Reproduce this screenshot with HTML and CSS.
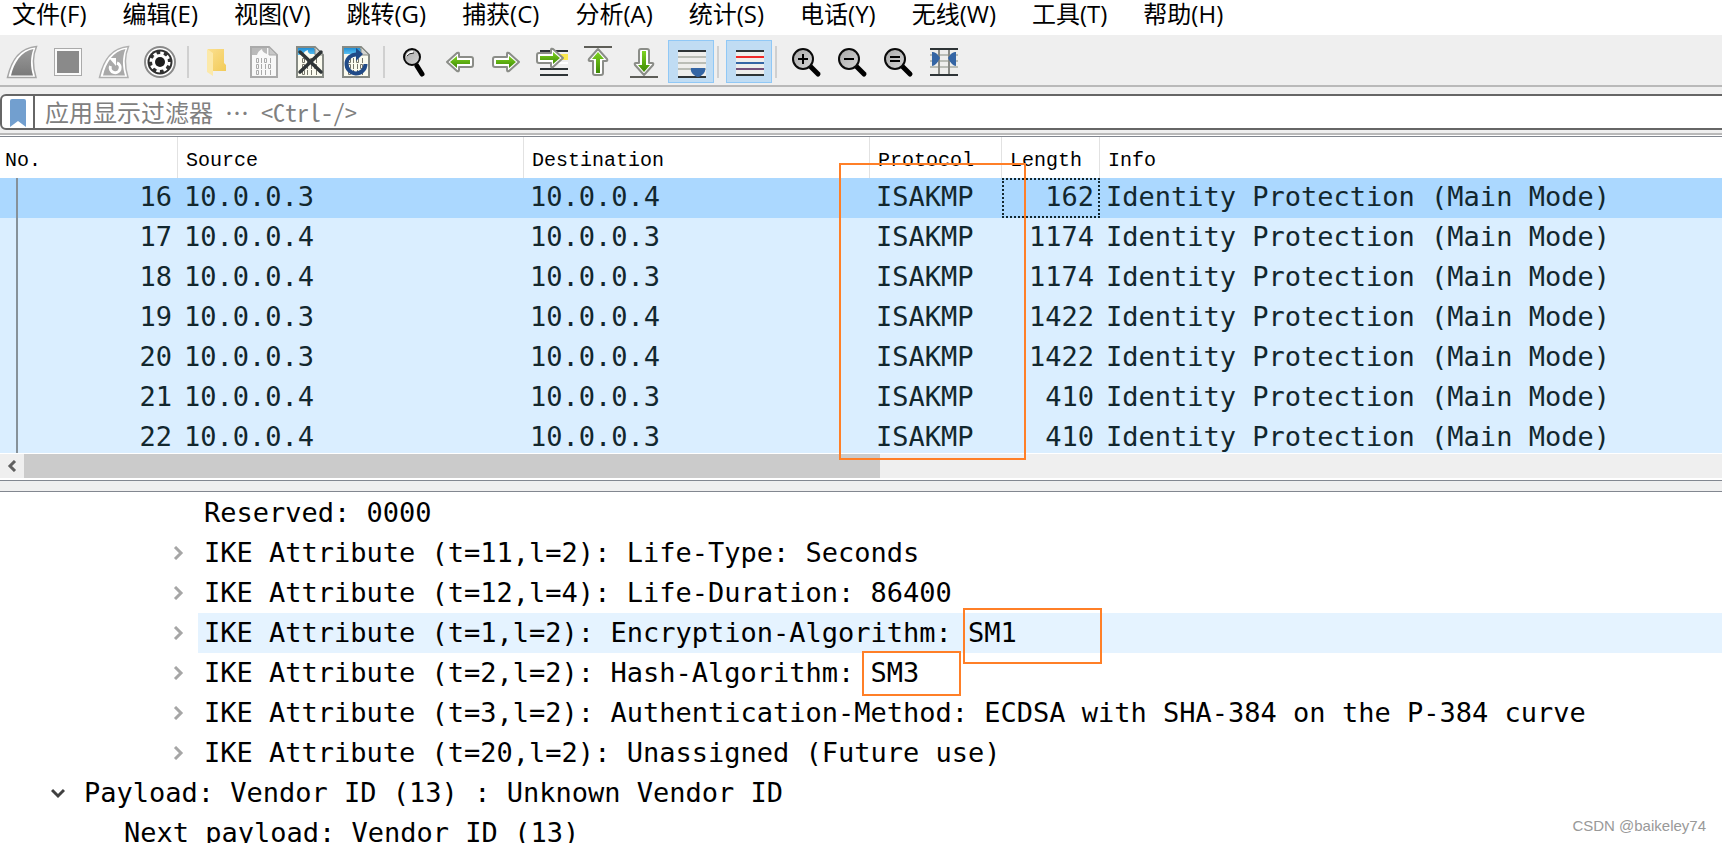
FILE: index.html
```html
<!DOCTYPE html>
<html lang="zh-CN">
<head>
<meta charset="utf-8">
<title>Wireshark</title>
<link rel="stylesheet" href="styles.css">
</head>
<body>
<svg class="defs" aria-hidden="true">
  <defs>
    <linearGradient id="grey" x1="0" y1="0" x2="0" y2="1"><stop offset="0" stop-color="#9a9a9a"/><stop offset="1" stop-color="#7a7a7a"/></linearGradient>
    <linearGradient id="green" x1="0" y1="0" x2="0" y2="1"><stop offset="0" stop-color="#7ed321"/><stop offset="1" stop-color="#3f8a05"/></linearGradient>
    <linearGradient id="sky" x1="0" y1="0" x2="0" y2="1"><stop offset="0" stop-color="#1f8fd6"/><stop offset="1" stop-color="#5cc0f0"/></linearGradient>
    <linearGradient id="fold" x1="0" y1="0" x2="1" y2="1"><stop offset="0" stop-color="#fbdf8e"/><stop offset="1" stop-color="#f2cb58"/></linearGradient>
    <linearGradient id="lens" x1="0" y1="0" x2="1" y2="1"><stop offset="0" stop-color="#a8a8a8"/><stop offset="1" stop-color="#d6d6d6"/></linearGradient>
    <g id="bits" fill="none" stroke-width="1">
      <path d="M6.500 12.500h2v4h-2zM11.500 12v5M14.500 12.500h2v4h-2zM20.500 12v5M6.500 18.500h2v4h-2zM11.500 18v5M15.500 18v5M18.500 18.500h2v4h-2zM6.500 24.500h2v4h-2zM11.500 24v5M15.500 24v5M20.500 24v5"/>
    </g>
    <g id="glass">
      <path d="M18 18L26 26" stroke="#000" stroke-width="5" stroke-linecap="round"/>
      <circle cx="11" cy="11" r="10" fill="url(#lens)" stroke="#0a0a0a" stroke-width="2"/>
    </g>
    <path id="arrow" d="M1 10L11 1Q13 0 13 2V5H25Q27 5 27 7V13Q27 15 25 15H13V18Q13 20 11 19Z" fill="#fff" stroke="#8b8d88" stroke-width="2" stroke-linejoin="round"/>
  </defs>
</svg>

<nav class="menu">
  <button>文件(F)</button><button>编辑(E)</button><button>视图(V)</button><button>跳转(G)</button><button>捕获(C)</button><button>分析(A)</button><button>统计(S)</button><button>电话(Y)</button><button>无线(W)</button><button>工具(T)</button><button>帮助(H)</button>
</nav>

<div class="toolbar">
  <button class="tool" aria-label="开始捕获"><svg viewBox="0 39 46 46">
    <path d="M7.500 77.500C11 62 18 48 36.500 46.500C32 57 33 68 36 77.500Z" fill="#fff" stroke="#a6a6a6" stroke-width="1.500"/>
    <path d="M11 75.500C14 63 21 51 33.500 49C30 58 30.500 67 33 75.500Z" fill="url(#grey)"/></svg></button>
  <button class="tool" aria-label="停止捕获"><svg viewBox="46 39 46 46">
    <rect x="54.500" y="48.500" width="27" height="27" fill="#fafafa" stroke="#aaa"/><rect x="57" y="51" width="22" height="22" fill="#8a8a8a"/></svg></button>
  <button class="tool" aria-label="重新开始捕获"><svg viewBox="92 39 46 46">
    <path d="M99.500 77.500C103 62 110 48 128.500 46.500C124 57 125 68 128 77.500Z" fill="#fff" stroke="#b0b0b0" stroke-width="1.500"/>
    <path d="M103 75.500C106 63 113 51 125.500 49C122 58 122.500 67 125 75.500Z" fill="#a9a9a9"/>
    <path d="M117 63A5 5 0 1 1 110.500 66" fill="none" stroke="#fff" stroke-width="3"/><path d="M109 58h7v8z" fill="#fff"/></svg></button>
  <button class="tool" aria-label="捕获选项"><svg viewBox="138 39 46 46">
    <circle cx="160" cy="62" r="15" fill="#fff" stroke="#8a8a8a" stroke-width="2"/><circle cx="160" cy="62" r="12.500" fill="#303030"/>
    <circle cx="160" cy="62" r="9" fill="none" stroke="#fff" stroke-width="3" stroke-dasharray="3.500 3.570"/>
    <circle cx="160" cy="62" r="8" fill="#fff"/><circle cx="160" cy="62" r="5" fill="#1c1c1c"/></svg></button>
  <span class="sep"></span>
  <button class="tool" aria-label="打开"><svg viewBox="196 39 46 46">
    <path d="M208 49H224V63L226 65V71H208Z" fill="url(#fold)"/><path d="M207 49L213 53V76L207 72Z" fill="#fce9a9"/></svg></button>
  <button class="tool" aria-label="保存"><svg viewBox="242 39 46 46">
    <g transform="translate(250 46)"><path d="M1 1H19L27 9V31H1Z" fill="#f8f8f8" stroke="#aaa" stroke-width="2"/><path d="M2 2H17V8Q12 6 12 3Q8 5 7 9H2Z" fill="#b9b9b9"/><path d="M19 1V9H27Z" fill="#c8c8c8" stroke="#aaa"/><use href="#bits" stroke="#aaa"/></g></svg></button>
  <button class="tool" aria-label="关闭"><svg viewBox="288 39 46 46">
    <g transform="translate(296 46)"><path d="M1 1H19L27 9V31H1Z" fill="#fbfbef" stroke="#868a84" stroke-width="2"/><path d="M2 2H18L23 8H14Q11 6 12 4Q8 5 7 9H2Z" fill="url(#sky)"/><path d="M19 1V9H27Z" fill="#d5d5d0" stroke="#868a84"/><use href="#bits" stroke="#77776c"/><path d="M4 6L25 26M25 6L4 26" stroke="#2e3436" stroke-width="3.500" stroke-linecap="round"/></g></svg></button>
  <button class="tool" aria-label="重新加载"><svg viewBox="334 39 46 46">
    <g transform="translate(342 46)"><path d="M1 1H19L27 9V31H1Z" fill="#fbfbef" stroke="#868a84" stroke-width="2"/><path d="M2 2H18L23 8H2Z" fill="url(#sky)"/><path d="M19 1V9H27Z" fill="#d5d5d0" stroke="#868a84"/><use href="#bits" stroke="#77776c"/><path d="M15 8.500A9.500 9.500 0 1 0 23.500 18" fill="none" stroke="#204a87" stroke-width="4"/><path d="M14 2L21 8L14 15Z" fill="#204a87"/></g></svg></button>
  <span class="sep"></span>
  <button class="tool" aria-label="查找分组"><svg viewBox="392 39 46 46">
    <path d="M417 66L422 74" stroke="#000" stroke-width="5" stroke-linecap="round"/><circle cx="412" cy="57" r="8" fill="url(#lens)" stroke="#0a0a0a" stroke-width="2"/><path d="M407 56Q408 52 413 52" fill="none" stroke="#fff" stroke-width="2"/><path d="M407 56Q409 53 414 53" fill="none" stroke="#222" stroke-width="1"/></svg></button>
  <button class="tool" aria-label="上一个分组"><svg viewBox="438 39 46 46">
    <use href="#arrow" x="446" y="52"/><path d="M450 62L457 56V60H470V64H457V68Z" fill="url(#green)"/></svg></button>
  <button class="tool" aria-label="下一个分组"><svg viewBox="484 39 46 46">
    <g transform="matrix(-1 0 0 1 520 52)"><use href="#arrow"/><path d="M4 10L11 4V8H24V12H11V16Z" fill="url(#green)"/></g></svg></button>
  <button class="tool" aria-label="转到分组"><svg viewBox="530 39 46 46">
    <path d="M540 51H568M540 69H568M540 75H568" stroke="#2e3436" stroke-width="2"/><rect x="552" y="54" width="16" height="6" fill="#fce94f"/><path d="M540 63H568" stroke="#fff" stroke-width="2"/>
    <g transform="matrix(-1 0 0 1 564 48)"><use href="#arrow"/><path d="M4 10L11 4V8H24V12H11V16Z" fill="url(#green)"/></g></svg></button>
  <button class="tool" aria-label="首个分组"><svg viewBox="576 39 46 46">
    <path d="M584 47H612" stroke="#5e5e58" stroke-width="2"/><g transform="matrix(0 1 1 0 588 48)"><use href="#arrow"/></g><path d="M598 52L604 59H600V73H596V59H592Z" transform="translate(0 0)" fill="url(#green)"/></svg></button>
  <button class="tool" aria-label="最新分组"><svg viewBox="622 39 46 46">
    <path d="M630 77H658" stroke="#5e5e58" stroke-width="2"/><g transform="matrix(0 -1 1 0 634 76)"><use href="#arrow"/></g><path d="M644 72L650 65H646V51H642V65H638Z" fill="url(#green)"/></svg></button>
  <button class="tool on" aria-label="自动滚动" aria-pressed="true"><svg viewBox="668 39 46 46">
    <rect x="678" y="50" width="28" height="28" fill="#eeeeec"/><path d="M678 51H706M678 77H706" stroke="#2e3436" stroke-width="2"/><path d="M678 57H706M678 63H706M678 69H706" stroke="#babdb6" stroke-width="2"/><path d="M691 68H705Q706 72 702 75Q698 79 694 75Q690 72 691 68Z" fill="#3465a4"/></svg></button>
  <span class="sep"></span>
  <button class="tool on" aria-label="着色" aria-pressed="true"><svg viewBox="726 39 46 46">
    <rect x="736" y="50" width="28" height="26" fill="#eeeeec"/><path d="M736 51H764M736 75H764" stroke="#2e3436" stroke-width="2"/><path d="M736 57H764" stroke="#ef2929" stroke-width="2"/><path d="M736 63H764" stroke="#3465a4" stroke-width="2"/><path d="M736 69H764" stroke="#75507b" stroke-width="2"/></svg></button>
  <span class="sep"></span>
  <button class="tool" aria-label="放大"><svg viewBox="784 39 46 46"><use href="#glass" x="792" y="48"/><path d="M798 59H808M803 54V64" stroke="#000" stroke-width="2"/></svg></button>
  <button class="tool" aria-label="缩小"><svg viewBox="830 39 46 46"><use href="#glass" x="838" y="48"/><path d="M844 59H854" stroke="#000" stroke-width="2"/></svg></button>
  <button class="tool" aria-label="正常大小"><svg viewBox="876 39 46 46"><use href="#glass" x="884" y="48"/><path d="M890 57H900M890 61H900" stroke="#000" stroke-width="2"/></svg></button>
  <button class="tool" aria-label="调整列宽"><svg viewBox="922 39 46 46">
    <rect x="930" y="48" width="28" height="28" fill="#eeeeec"/><path d="M930 55H958M930 61H958M930 67H958" stroke="#babdb6" stroke-width="2"/><path d="M939 48V76M949 48V76" stroke="#888a85" stroke-width="2"/><path d="M930 49H958M930 75H958" stroke="#2e3436" stroke-width="2"/><path d="M932 52Q936 51 940 58Q936 66 932 66ZM956 52Q952 51 948 58Q952 66 956 66Z" fill="#3465a4"/></svg></button>
</div>

<div class="filter-row">
  <div class="filter">
    <button class="bookmark" aria-label="书签"><svg width="16" height="28" viewBox="0 0 16 28"><path d="M0 2Q0 0 2 0H14Q16 0 16 2V28L8 22L0 28Z" fill="#729fcf"/></svg></button>
    <input type="text" aria-label="显示过滤器" placeholder="应用显示过滤器 ⋯ &lt;Ctrl-/&gt;">
  </div>
</div>

<main class="panes">
  <section class="packets">
    <div class="rows">
      <table>
        <colgroup><col class="c-no"><col class="c-addr"><col class="c-addr"><col class="c-proto"><col class="c-len"><col></colgroup>
        <thead><tr><th>No.</th><th>Source</th><th>Destination</th><th>Protocol</th><th>Length</th><th>Info</th></tr></thead>
        <tbody>
          <tr class="selected"><td class="num">16</td><td>10.0.0.3</td><td>10.0.0.4</td><td>ISAKMP</td><td class="num focus">162</td><td>Identity Protection (Main Mode)</td></tr>
          <tr><td class="num">17</td><td>10.0.0.4</td><td>10.0.0.3</td><td>ISAKMP</td><td class="num">1174</td><td>Identity Protection (Main Mode)</td></tr>
          <tr><td class="num">18</td><td>10.0.0.4</td><td>10.0.0.3</td><td>ISAKMP</td><td class="num">1174</td><td>Identity Protection (Main Mode)</td></tr>
          <tr><td class="num">19</td><td>10.0.0.3</td><td>10.0.0.4</td><td>ISAKMP</td><td class="num">1422</td><td>Identity Protection (Main Mode)</td></tr>
          <tr><td class="num">20</td><td>10.0.0.3</td><td>10.0.0.4</td><td>ISAKMP</td><td class="num">1422</td><td>Identity Protection (Main Mode)</td></tr>
          <tr><td class="num">21</td><td>10.0.0.4</td><td>10.0.0.3</td><td>ISAKMP</td><td class="num">410</td><td>Identity Protection (Main Mode)</td></tr>
          <tr><td class="num">22</td><td>10.0.0.4</td><td>10.0.0.3</td><td>ISAKMP</td><td class="num">410</td><td>Identity Protection (Main Mode)</td></tr>
        </tbody>
      </table>
    </div>
    <div class="scrollbar">
      <button class="scroll-left" aria-label="向左滚动"><svg width="10" height="12" viewBox="0 0 10 12"><path d="M8 1L3 6L8 11" fill="none" stroke="#606060" stroke-width="3"/></svg></button>
      <div class="thumb"></div>
    </div>
    <div class="mark mark-protocol"></div>
  </section>
  <div class="splitter"></div>
  <section class="details">
    <ul class="tree">
      <li class="deep"><span class="chev"></span><span class="label">Reserved: 0000</span></li>
      <li class="deep"><span class="chev"><svg viewBox="0 0 14 14"><path d="M4 1L10 7L4 13"/></svg></span><span class="label">IKE Attribute (t=11,l=2): Life-Type: Seconds</span></li>
      <li class="deep"><span class="chev"><svg viewBox="0 0 14 14"><path d="M4 1L10 7L4 13"/></svg></span><span class="label">IKE Attribute (t=12,l=4): Life-Duration: 86400</span></li>
      <li class="deep hover"><span class="chev"><svg viewBox="0 0 14 14"><path d="M4 1L10 7L4 13"/></svg></span><span class="label">IKE Attribute (t=1,l=2): Encryption-Algorithm: SM1</span></li>
      <li class="deep"><span class="chev"><svg viewBox="0 0 14 14"><path d="M4 1L10 7L4 13"/></svg></span><span class="label">IKE Attribute (t=2,l=2): Hash-Algorithm: SM3</span></li>
      <li class="deep"><span class="chev"><svg viewBox="0 0 14 14"><path d="M4 1L10 7L4 13"/></svg></span><span class="label">IKE Attribute (t=3,l=2): Authentication-Method: ECDSA with SHA-384 on the P-384 curve</span></li>
      <li class="deep"><span class="chev"><svg viewBox="0 0 14 14"><path d="M4 1L10 7L4 13"/></svg></span><span class="label">IKE Attribute (t=20,l=2): Unassigned (Future use)</span></li>
      <li class="top"><span class="chev open"><svg viewBox="0 0 14 14"><path d="M1 4L7 10L13 4"/></svg></span><span class="label">Payload: Vendor ID (13) : Unknown Vendor ID</span></li>
      <li class="mid"><span class="chev"></span><span class="label">Next payload: Vendor ID (13)</span></li>
    </ul>
    <div class="mark mark-encryption"></div>
    <div class="mark mark-hash"></div>
    <div class="watermark">CSDN @baikeley74</div>
  </section>
</main>
</body>
</html>
```

FILE: styles.css
```css
* { box-sizing: border-box; }

:root {
  --mono: "DejaVu Sans Mono", monospace;
  --line: #828790;
}

body {
  margin: 0;
  height: 100vh;
  overflow: hidden;
  display: flex;
  flex-direction: column;
  background: #fff;
  color: #000;
  font-family: "Open Sans", "Noto Sans CJK SC", sans-serif;
}

button {
  border: 0;
  padding: 0;
  background: none;
  color: inherit;
  font: inherit;
}

.defs { position: absolute; width: 0; height: 0; }

.menu {
  display: flex;
  gap: 36px;
  flex: none;
  height: 37px;
  padding: 0 12px 8px;
  border-bottom: 2px solid #efefef;
  font-size: 24px;
  line-height: 27px;
  white-space: nowrap;
}

.toolbar {
  display: flex;
  align-items: center;
  flex: none;
  height: 50px;
  padding-top: 1px;
  background: #efefef;
  border-bottom: 2px solid #b9b9b9;
}

.tool { width: 46px; height: 46px; flex: none; }
.tool svg { display: block; width: 46px; height: 46px; }
.tool.on { height: 43px; background: #c0dcf3; border: 1px solid #90c8f6; }
.tool.on svg { margin: -2px -1px; }

.sep {
  flex: none;
  width: 2px;
  height: 32px;
  margin: 0 7px 0 3px;
  background: #d0d0d0;
}

.filter-row {
  flex: none;
  padding: 7px 0 3px;
  background: #efefef;
  border-bottom: 2px solid #b9b9b9;
}

.filter {
  display: flex;
  height: 36px;
  margin-right: -8px;
  border: 2px solid #666;
  border-radius: 6px;
  background: #fff;
}

.bookmark {
  width: 33px;
  padding: 2px 0 0 8px;
  border-right: 2px solid #666;
  text-align: left;
}
.bookmark svg { display: block; }

.filter input {
  flex: 1;
  border: 0;
  padding: 0 10px;
  background: none;
  font: 300 24px/32px "Noto Sans Mono CJK SC", "Noto Sans CJK SC", monospace;
}
.filter input::placeholder { color: #808080; opacity: 1; }

.panes {
  flex: 1;
  min-height: 0;
  display: flex;
  flex-direction: column;
  padding-top: 1px;
}

.packets {
  flex: 344 1 0;
  min-height: 0;
  display: flex;
  flex-direction: column;
  position: relative;
  border-top: 1px solid var(--line);
  border-bottom: 1px solid var(--line);
}

.rows { flex: 1; min-height: 0; overflow: hidden; }

table {
  width: 100%;
  table-layout: fixed;
  border-collapse: separate;
  border-spacing: 0;
}

.c-no { width: 178px; }
.c-addr { width: 346px; }
.c-proto { width: 132px; }
.c-len { width: 98px; }

th {
  height: 41px;
  padding: 6px 0 0 8px;
  border-right: 1px solid #e2e2e2;
  font: 400 20px/24px "Liberation Mono", monospace;
  text-align: left;
}
th:first-child { padding-left: 5px; }
th:last-child { border-right: 0; }

td {
  height: 40px;
  padding: 0 6px 2px;
  font: 27px/38px var(--mono);
  color: #12272e;
  background-color: #daeeff;
  white-space: nowrap;
}
tr.selected td { background-color: #abd8ff; }
.num { text-align: right; }
td:first-child {
  background-image: linear-gradient(#869199, #869199);
  background-size: 2px 100%;
  background-position: 16px 0;
  background-repeat: no-repeat;
}
.focus {
  outline: 2px dotted #12272e;
  outline-offset: -2px;
}

.scrollbar {
  display: flex;
  flex: none;
  height: 27px;
  background: #efefef;
  border: solid #fff;
  border-width: 1px 0 2px;
}
.scroll-left { width: 24px; flex: none; display: grid; place-items: center; }
.thumb { width: 50%; max-width: 856px; background: #cbcbcb; }

.splitter { flex: none; height: 10px; background: #efefef; }

.details {
  flex: 353 1 0;
  min-height: 0;
  position: relative;
  overflow: hidden;
  border-top: 1px solid var(--line);
}

.tree {
  margin: 0;
  padding: 1px 0 0;
  list-style: none;
  font: 27px/40px var(--mono);
  white-space: nowrap;
}
.tree li { display: flex; height: 40px; }
.top { padding-left: 38px; }
.mid { padding-left: 78px; }
.deep { padding-left: 158px; }

.chev { width: 40px; flex: none; display: grid; place-items: center; }
.chev svg { width: 14px; height: 14px; fill: none; stroke: #a6a6a6; stroke-width: 3; }
.chev.open svg { stroke: #404040; }
.label { flex: 1; padding-left: 6px; }
.hover .label { background: #e5f3ff; }

.mark { position: absolute; border: 2px solid #ff7f27; }
.mark-protocol { left: 839px; top: 26px; width: 187px; height: 297px; }
.mark-encryption { left: 963px; top: 116px; width: 139px; height: 56px; }
.mark-hash { left: 862px; top: 159px; width: 99px; height: 45px; }

.watermark {
  position: absolute;
  right: 16px;
  bottom: 8px;
  font: 15px/18px "Liberation Sans", sans-serif;
  color: #999;
}
```
